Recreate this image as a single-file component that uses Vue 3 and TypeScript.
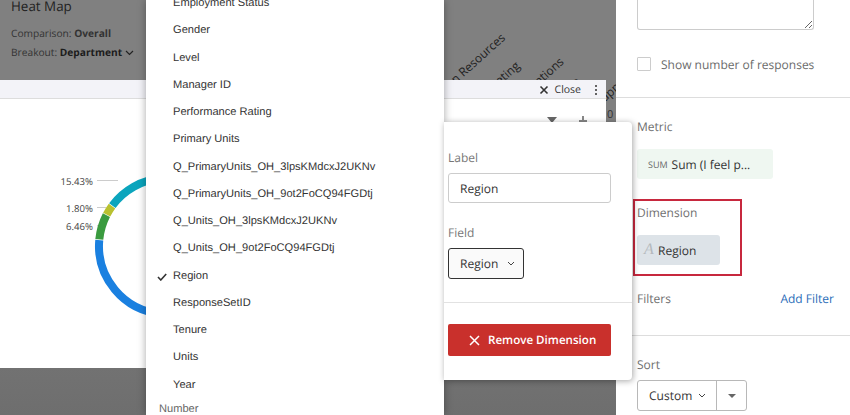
<script setup lang="ts">
const menuItems: string[] = [
  'Employment Status', 'Gender', 'Level', 'Manager ID', 'Performance Rating', 'Primary Units',
  'Q_PrimaryUnits_OH_3lpsKMdcxJ2UKNv', 'Q_PrimaryUnits_OH_9ot2FoCQ94FGDtj',
  'Q_Units_OH_3lpsKMdcxJ2UKNv', 'Q_Units_OH_9ot2FoCQ94FGDtj', 'Region', 'ResponseSetID',
  'Tenure', 'Units', 'Year',
]
const axisLabels = [
  { text: 'Human Resources', cls: 'ax1' },
  { text: 'Marketing', cls: 'ax2' },
  { text: 'Operations', cls: 'ax3' },
  { text: 'Finance', cls: 'ax4' },
  { text: 'Support', cls: 'ax5' },
]
const cx = 167
const cy = 148
const r = 68
function arc(a0: number, a1: number): string {
  const p = (a: number) => {
    const t = (a * Math.PI) / 180
    return `${(cx - r * Math.cos(t)).toFixed(2)} ${(cy + r * Math.sin(t)).toFixed(2)}`
  }
  return `M${p(a0)} A${r} ${r} 0 0 ${a1 < a0 ? 1 : 0} ${p(a1)}`
}
const segments = [
  { d: arc(85, -5), color: '#1a80e0' },
  { d: arc(-5.5, -27), color: '#3a9b3f' },
  { d: arc(-27.5, -36), color: '#b9c12f' },
  { d: arc(-36.5, -85), color: '#0ba5bd' },
]
const callouts = [
  { text: '15.43%', y: 83, x2: 118 },
  { text: '1.80%', y: 110, x2: 106 },
  { text: '6.46%', y: 128, x2: 98 },
]
</script>

<template>
  <div class="page">
    <section class="main">
      <header class="report-head">
        <h1 class="title">Heat Map</h1>
        <p class="meta">Comparison: <b>Overall</b></p>
        <p class="meta breakout">
          Breakout: <b class="dark">Department</b>
          <svg class="chev" width="9" height="6" viewBox="0 0 9 6"><path d="M1 1l3.5 3.5L8 1" fill="none" stroke="#222" stroke-width="1.2" /></svg>
        </p>
      </header>
      <span v-for="a in axisLabels" :key="a.cls" class="axis" :class="a.cls">{{ a.text }}</span>
      <span class="gap-num">0</span>
      <div class="card">
        <div class="card-bar">
          <svg width="10" height="10" viewBox="0 0 10 10"><path d="M1.5 1.5l7 7M8.5 1.5l-7 7" stroke="#333" stroke-width="1.6" /></svg>
          <span class="close-text">Close</span>
          <span class="dots"><i></i><i></i><i></i></span>
        </div>
        <div class="card-tools">
          <span class="tri"></span>
          <span class="plus"></span>
        </div>
        <svg class="donut" width="440" height="270" viewBox="0 0 440 270">
          <path v-for="s in segments" :key="s.color" :d="s.d" fill="none" :stroke="s.color" stroke-width="8" />
          <g v-for="c in callouts" :key="c.text">
            <line x1="97" :y1="c.y - 0.5" :x2="c.x2" :y2="c.y - 0.5" stroke="#ccc" />
            <text x="93" :y="c.y + 3.5" text-anchor="end" class="pct">{{ c.text }}</text>
          </g>
        </svg>
      </div>
    </section>

    <aside class="panel">
      <textarea class="notes"></textarea>
      <label class="check-row"><span class="box"></span>Show number of responses</label>
      <hr class="rule first" />
      <h2 class="lbl metric-lbl">Metric</h2>
      <div class="pill green"><span class="sum">SUM</span> Sum (I feel p...</div>
      <div class="highlight">
        <h2 class="lbl">Dimension</h2>
        <div class="pill blue"><span class="a">A</span>Region</div>
      </div>
      <div class="filters">
        <h2 class="lbl">Filters</h2>
        <a class="add">Add Filter</a>
      </div>
      <hr class="rule second" />
      <h2 class="lbl sort-lbl">Sort</h2>
      <div class="btn-group">
        <span class="seg main-seg">Custom
          <svg width="8" height="5" viewBox="0 0 8 5"><path d="M1 1l3 3 3-3" fill="none" stroke="#444" stroke-width="1" /></svg>
        </span>
        <span class="seg caret"><span class="tri small"></span></span>
      </div>
    </aside>

    <div class="menu">
      <div v-for="m in menuItems" :key="m" class="item">
        <svg v-if="m === 'Region'" class="tick" width="10" height="8" viewBox="0 0 10 8"><path d="M1 4l2.8 3L9.2 1" fill="none" stroke="#333" stroke-width="1.6" /></svg>
        {{ m }}
      </div>
      <div class="group">Number</div>
    </div>

    <div class="popover">
      <div class="pop-body">
        <label class="pop-lbl">Label</label>
        <input class="pop-input" value="Region" />
        <label class="pop-lbl field-lbl">Field</label>
        <span class="pop-select">Region
          <svg width="8" height="5" viewBox="0 0 8 5"><path d="M1 1l3 3 3-3" fill="none" stroke="#444" stroke-width="1" /></svg>
        </span>
      </div>
      <div class="pop-foot">
        <button class="remove">
          <svg width="11" height="11" viewBox="0 0 11 11"><path d="M1 1l9 9M10 1l-9 9" stroke="#fff" stroke-width="1.5" /></svg>
          Remove Dimension
        </button>
      </div>
    </div>
  </div>
</template>

<style>
html, body { margin: 0; background: #fff; }
</style>

<style scoped>
.page {
  position: relative;
  width: 850px;
  height: 415px;
  overflow: hidden;
  display: grid;
  grid-template-columns: 616px 234px;
  font-family: "Open Sans", sans-serif;
  color: #333;
  text-rendering: geometricPrecision;
}
.page input, .page button { text-rendering: geometricPrecision; }
.main {
  position: relative;
  overflow: hidden;
  background: linear-gradient(#808080 0, #808080 200px, #6e6e6e 415px);
}
.report-head { height: 80px; padding-left: 11px; box-sizing: border-box; }
.title { margin: 0; font-size: 13.4px; font-weight: 400; line-height: 13px; color: #222; }
.meta { margin: 13px 0 0; font-size: 10.2px; line-height: 15px; color: #333; }
.meta b { font-weight: 700; color: #333; }
.meta b.dark { color: #1c1c1c; }
.breakout { margin-top: 4px; }
.chev { margin-left: 3px; vertical-align: 0; }
.axis {
  position: absolute;
  font-size: 12px;
  color: #222;
  white-space: nowrap;
  transform: rotate(-42deg);
  transform-origin: right center;
}
.ax1 { right: 113px; top: 27px; }
.ax2 { right: 98px; top: 55px; }
.ax3 { right: 54px; top: 51px; }
.ax4 { right: 38px; top: 71px; }
.ax5 { right: -14px; top: 65px; }
.gap-num { position: absolute; left: 607px; top: 107px; font-size: 11px; color: #333; }
.card {
  position: relative;
  width: 606px;
  height: 288px;
  background: #fff;
  overflow: hidden;
}
.card-bar {
  height: 17px;
  padding-top: 1px;
  background: #f3f3f8;
  border-bottom: 1px solid #ddd;
  display: flex;
  align-items: center;
  justify-content: flex-end;
  padding-right: 9px;
  font-size: 10.5px;
  color: #333;
}
.close-text { margin-left: 6px; }
.dots { display: flex; flex-direction: column; gap: 2px; margin-left: 14px; }
.dots i { width: 2px; height: 2px; background: #333; border-radius: 50%; }
.card-tools { display: flex; justify-content: flex-end; align-items: flex-start; gap: 22px; height: 10px; padding: 18px 19px 0 0; }
.tri { width: 0; height: 0; border-left: 5px solid transparent; border-right: 5px solid transparent; border-top: 6px solid #666; }
.plus { position: relative; width: 8px; height: 8px; }
.plus::before { content: ""; position: absolute; left: 3px; top: -1px; width: 1.5px; height: 9px; background: #888; }
.plus::after { content: ""; position: absolute; left: 0; top: 3px; width: 8px; height: 1.5px; background: #888; }
.donut { position: absolute; left: 0; top: 18px; }
.pct { font-size: 9.6px; fill: #444; font-family: "Open Sans", sans-serif; }

.panel { background: #fff; padding-left: 21px; overflow: hidden; position: relative; }
.notes {
  display: block;
  width: 177px;
  height: 30px;
  margin: 0;
  box-sizing: border-box;
  border: 1px solid #ccc;
  border-top: 0;
  border-radius: 0 0 3px 3px;
  outline: none;
}
.check-row { display: flex; align-items: center; margin-top: 27px; height: 14px; font-size: 12px; color: #6b6b6b; }
.box { width: 12px; height: 12px; border: 1px solid #ccc; border-radius: 1px; margin-right: 10px; }
.rule { border: 0; border-top: 1px solid #ddd; margin: 0 0 0 -21px; }
.rule.first { margin-top: 26px; }
.lbl { margin: 0; font-size: 12px; font-weight: 400; color: #6f6f6f; line-height: 16px; }
.metric-lbl { margin-top: 21px; }
.pill { display: flex; align-items: center; height: 30px; border-radius: 3px; font-size: 12px; color: #333; box-sizing: border-box; }
.pill.green { width: 136px; margin-top: 14px; background: #eff7f1; padding-left: 11px; }
.sum { font-size: 9px; color: #666; margin-right: 4px; }
.highlight {
  width: 109px;
  height: 77px;
  box-sizing: border-box;
  margin: 20px 0 0 -4px;
  padding: 4px 0 0 2px;
  border: 2px solid #c7283e;
}
.pill.blue { width: 83px; margin-top: 14px; background: #dde3e8; padding-left: 7px; }
.a { font-family: "Liberation Serif", serif; font-style: italic; font-size: 16px; color: #b4b9bd; margin-right: 3px; width: 11px; }
.filters { display: flex; justify-content: space-between; margin-top: 15px; padding-right: 16px; }
.add { font-size: 12px; color: #2a6db8; line-height: 16px; }
.rule.second { margin-top: 28px; }
.sort-lbl { margin-top: 21px; }
.btn-group {
  display: inline-flex;
  margin-top: 7px;
  height: 31px;
  border: 1px solid #b8b8b8;
  border-radius: 3px;
  box-sizing: border-box;
  font-size: 12px;
  color: #333;
}
.seg { display: flex; align-items: center; }
.main-seg { width: 79px; gap: 6px; padding-left: 11px; box-sizing: border-box; border-right: 1px solid #b8b8b8; }
.caret { width: 29px; justify-content: center; }
.tri.small { border-left-width: 4px; border-right-width: 4px; border-top-width: 4px; }

.menu {
  position: absolute;
  left: 146px;
  top: 0;
  width: 298px;
  height: 415px;
  background: #fff;
  box-shadow: 0 0 8px rgba(0, 0, 0, 0.35);
  overflow: hidden;
  font-family: "Liberation Sans", Arial, sans-serif;
  font-size: 11.1px;
  color: #333;
}
.item {
  position: relative;
  height: 27.25px;
  line-height: 27.25px;
  padding-left: 27px;
  top: -10px;
}
.tick { position: absolute; left: 11px; top: 10px; }
.group { position: relative; top: -10px; padding-left: 13px; height: 20px; line-height: 20px; margin-top: 0; color: #666; }

.popover {
  position: absolute;
  left: 444px;
  top: 122px;
  width: 188px;
  height: 258px;
  background: #fff;
  border-radius: 0 4px 4px 0;
  box-shadow: 1px 1px 6px rgba(0, 0, 0, 0.35);
  box-sizing: border-box;
  display: flex;
  flex-direction: column;
}
.pop-body { padding: 28px 21px 0 4px; height: 181px; box-sizing: border-box; border-bottom: 1px solid #e2e2e2; }
.pop-lbl { display: block; font-size: 12px; line-height: 16px; color: #777; }
.pop-input {
  display: block;
  width: 163px;
  height: 30px;
  margin-top: 7px;
  padding: 0 11px;
  box-sizing: border-box;
  border: 1px solid #ccc;
  border-radius: 3px;
  font: 12px "Open Sans", sans-serif;
  color: #333;
  outline: none;
}
.field-lbl { margin-top: 22px; }
.pop-select {
  display: flex;
  align-items: center;
  gap: 9px;
  width: 76px;
  height: 31px;
  margin-top: 7px;
  padding-left: 11px;
  box-sizing: border-box;
  border: 1px solid #333;
  border-radius: 3px;
  background: #fafafa;
  font-size: 12px;
  color: #333;
}
.pop-foot { padding: 21px 21px 0 4px; }
.remove {
  display: flex;
  align-items: center;
  gap: 8px;
  width: 163px;
  height: 32px;
  padding: 0 0 0 21px;
  border: 0;
  border-radius: 2px;
  background: #c9302c;
  color: #fff;
  font: 600 11.6px "Open Sans", sans-serif;
}
</style>
